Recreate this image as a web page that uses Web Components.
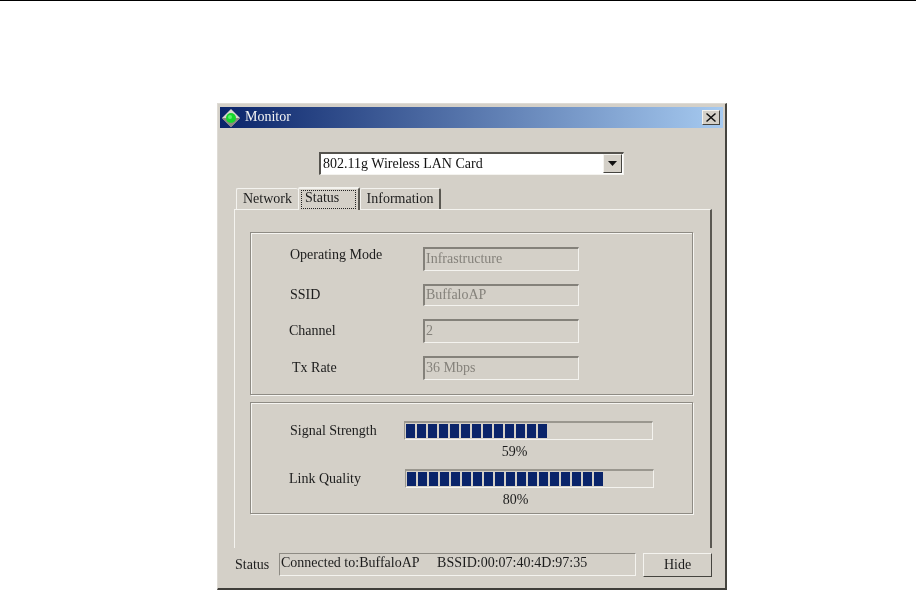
<!DOCTYPE html>
<html lang="en">
<head>
<meta charset="UTF-8">
<title>Monitor</title>
<style>
  html, body { margin: 0; background: #fff; }
  body { height: 590px; overflow: hidden; font: 14px "Liberation Serif", serif; color: #1c1c1c; }
  .rule { height: 1px; background: #000; }
</style>
</head>
<body>
<div class="rule"></div>
<mon-window caption="Monitor">
  <mon-combo value="802.11g Wireless LAN Card"></mon-combo>
  <mon-tabs>
    <mon-group h="163" pad="14">
      <mon-field label="Operating Mode" value="Infrastructure" h="24" top="0" shift="0" raise="4"></mon-field>
      <mon-field label="SSID" value="BuffaloAP" h="22" top="13" shift="0" raise="0"></mon-field>
      <mon-field label="Channel" value="2" h="24" top="13" shift="-1" raise="0"></mon-field>
      <mon-field label="Tx Rate" value="36 Mbps" h="24" top="13" shift="2" raise="0"></mon-field>
    </mon-group>
    <mon-group h="112" pad="18" style="margin-top:7px">
      <mon-meter label="Signal Strength" value="59" left="114" nudge="0"></mon-meter>
      <mon-meter label="Link Quality" value="80" left="115" nudge="-2" style="margin-top:11px"></mon-meter>
    </mon-group>
  </mon-tabs>
  <mon-status text="Connected to:BuffaloAP&#160;&#160;&#160;&#160;&#160;BSSID:00:07:40:4D:97:35"></mon-status>
</mon-window>

<script>
  // small helper, every element gets an open shadow root with its own style
  class MonBase extends HTMLElement {
    render(html) {
      if (!this.shadowRoot) this.attachShadow({ mode: 'open' });
      this.shadowRoot.innerHTML = html;
    }
    connectedCallback() { this.render(this.view()); }
  }

  const ETCH = 'border:1px solid #8e8b84; box-shadow: inset 1px 1px 0 #f6f5f2, 1px 1px 0 #f6f5f2;';
  const SUNK = 'border-style:solid; border-width:2px 1px 1px 2px; border-color:#84817a #f4f3ef #f4f3ef #84817a;';

  class MonWindow extends MonBase {
    view() {
      return `<style>
        :host { display:block; box-sizing:border-box; width:510px; height:487px; margin:102px 0 0 217px;
          background:#d4d0c8; padding:3px 2px 0 2px; filter:blur(.3px);
          border-style:solid; border-width:1px 2px 2px 1px; border-color:#dedbd5 #45443f #3f3e3a #dedbd5; }
        .bar { display:flex; align-items:center; height:21px; padding:0 3px 0 2px;
          background:linear-gradient(90deg,#0a246a,#a6caf0); color:#f4f4f4; }
        .bar svg { display:block; }
        .cap { margin-left:5px; flex:1; position:relative; top:-1px; }
        .x { box-sizing:border-box; width:18px; height:15px; background:#d4d0c8; display:flex; align-items:center; justify-content:center;
          border:1px solid; border-color:#f4f3ef #45443f #45443f #f4f3ef; }
      </style>
      <div class="bar">
        <svg width="18" height="18" viewBox="0 0 18 18">
          <path d="M9 0 18 9 9 18 0 9Z" fill="#d9d7cf"/>
          <path d="M9 18 18 9H14L9 14 4 9H0Z" fill="#8c8a80"/>
          <circle cx="9" cy="9" r="5" fill="#17d62c"/>
          <circle cx="8" cy="8" r="2" fill="#5cf26a"/>
        </svg>
        <span class="cap">${this.getAttribute('caption')}</span>
        <span class="x"><svg width="10" height="9" viewBox="0 0 10 9"><path d="M1 0 5 3.5 9 0 10 1 6 4.5 10 8 9 9 5 5.5 1 9 0 8 4 4.5 0 1Z" fill="#111"/></svg></span>
      </div>
      <slot></slot>`;
    }
  }

  class MonCombo extends MonBase {
    view() {
      return `<style>
        :host { display:flex; box-sizing:border-box; width:305px; height:23px; margin:24px 0 0 99px; background:#fff;
          ${SUNK} border-color:#55534e #f4f3ef #f4f3ef #55534e; padding:0 1px 1px 0; }
        .v { flex:1; line-height:19px; padding-left:2px; color:#111; }
        .b { box-sizing:border-box; width:19px; background:#d4d0c8; display:flex; align-items:center; justify-content:center;
          border:1px solid; border-color:#f4f3ef #45443f #45443f #f4f3ef; }
      </style>
      <span class="v">${this.getAttribute('value')}</span>
      <span class="b"><svg width="9" height="5" viewBox="0 0 9 5"><path d="M0 0H9L4.5 5Z" fill="#111"/></svg></span>`;
    }
  }

  class MonTabs extends MonBase {
    view() {
      return `<style>
        :host { display:block; margin:11px 0 0 14px; width:478px; }
        .row { display:flex; height:23px; padding-left:2px; align-items:flex-end; }
        .t { box-sizing:border-box; height:21px; line-height:19px; text-align:center; border-top:1px solid #f4f3ef; border-left:1px solid #f4f3ef; border-right:2px solid #5a5852; border-radius:2px 2px 0 0; }
        .n { width:62px; border-right:none; }
        .s { width:62px; height:23px; background:#d4d0c8; position:relative; z-index:1; margin-bottom:-1px; border-top:2px solid #f4f3ef; padding:1px 2px 0; text-align:left; }
        .s span { display:block; box-sizing:border-box; height:19px; line-height:13px; padding-left:3px; border:1px dotted #222; }
        .i { width:81px; }
        .panel { box-sizing:border-box; height:339px; padding:22px 16px 0 15px; border-top:1px solid #f4f3ef; border-left:1px solid #f4f3ef; border-right:2px solid #5a5852; }
      </style>
      <div class="row">
        <div class="t n">Network</div>
        <div class="t s"><span>Status</span></div>
        <div class="t i">Information</div>
      </div>
      <div class="panel"><slot></slot></div>`;
    }
  }

  class MonGroup extends MonBase {
    view() {
      return `<style>
        :host { display:block; box-sizing:border-box; width:443px; height:${this.getAttribute('h')}px;
          padding-top:${this.getAttribute('pad')}px; ${ETCH} }
      </style><slot></slot>`;
    }
  }

  class MonField extends MonBase {
    view() {
      const h = this.getAttribute('h');
      return `<style>
        :host { display:flex; align-items:center; height:${h}px; margin-top:${this.getAttribute('top')}px; padding-left:39px; }
        .l { width:133px; position:relative; left:${this.getAttribute('shift')}px; top:-${this.getAttribute('raise')}px; }
        .f { box-sizing:border-box; width:156px; height:${h}px; ${SUNK} color:#85827b; padding-left:1px; line-height:${h - 5}px; }
      </style>
      <span class="l">${this.getAttribute('label')}</span>
      <span class="f">${this.getAttribute('value')}</span>`;
    }
  }

  class MonMeter extends MonBase {
    view() {
      const v = +this.getAttribute('value');
      const n = Math.round(247 * v / 100 / 11);
      return `<style>
        :host { display:block; padding-left:${+this.getAttribute('left') - 75}px; }
        .top { display:flex; align-items:center; height:19px; }
        .l { width:114px; flex:none; position:relative; left:${this.getAttribute('nudge')}px; }
        .bar { box-sizing:border-box; width:249px; height:19px; flex:none; display:flex; gap:2px; padding:1px 1px 0 1px;
          border-style:solid; border-width:2px 1px 1px 1px; border-color:#9a978f #f4f3ef #f4f3ef #9a978f; }
        .b { width:9px; height:14px; background:#0a246a; flex:none; }
        .p { width:249px; margin-left:100px; height:18px; line-height:24px; text-align:center; }
      </style>
      <div class="top"><span class="l">${this.getAttribute('label')}</span>
        <div class="bar">${'<i class="b"></i>'.repeat(n)}</div></div>
      <div class="p">${v}%</div>`;
    }
  }

  class MonStatus extends MonBase {
    view() {
      return `<style>
        :host { display:flex; align-items:flex-start; margin-top:5px; padding-left:15px; }
        .l { width:44px; flex:none; line-height:24px; }
        .box { box-sizing:border-box; width:357px; height:23px; ${SUNK} border-width:1px; border-color:#8e8b84 #f4f3ef #f4f3ef #8e8b84; line-height:18px; padding-left:1px; }
        .btn { box-sizing:border-box; width:69px; height:24px; margin-left:7px; text-align:center; line-height:22px;
          border:1px solid; border-color:#f4f3ef #45443f #45443f #f4f3ef; }
      </style>
      <span class="l">Status</span>
      <div class="box">${this.getAttribute('text')}</div>
      <div class="btn">Hide</div>`;
    }
  }

  customElements.define('mon-window', MonWindow);
  customElements.define('mon-combo', MonCombo);
  customElements.define('mon-tabs', MonTabs);
  customElements.define('mon-group', MonGroup);
  customElements.define('mon-field', MonField);
  customElements.define('mon-meter', MonMeter);
  customElements.define('mon-status', MonStatus);
</script>
</body>
</html>
